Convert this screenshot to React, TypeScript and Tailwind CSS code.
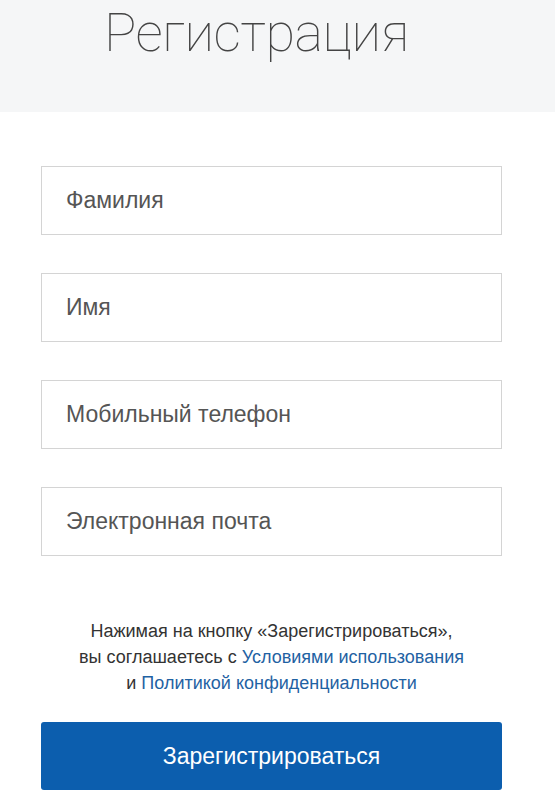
import React from 'react';

const fields = ['Фамилия', 'Имя', 'Мобильный телефон', 'Электронная почта'];

export default function App() {
  return (
    <div className="min-h-[800px] bg-white" style={{ fontFamily: '"Liberation Sans", Arial, sans-serif' }}>
      {/* Header */}
      <div className="h-[112px] bg-[#f5f6f7] flex justify-center pr-[42px]">
        <h1
          className="text-[54px] leading-none font-thin text-[#444] mt-[6px] tracking-[-0.5px]"
          style={{ fontFamily: 'Roboto, sans-serif' }}
        >
          Регистрация
        </h1>
      </div>

      {/* Form */}
      <div className="pl-[41px] pr-[53px] pt-[54px]">
        <div className="flex flex-col gap-[38px]">
          {fields.map((label) => (
            <div
              key={label}
              className="h-[69px] border border-[#d4d4d4] flex items-center px-[24px] text-[23px] text-[#555]"
            >
              {label}
            </div>
          ))}
        </div>

        <p className="mt-[62px] text-center text-[18px] leading-[26px] text-[#333]">
          Нажимая на кнопку «Зарегистрироваться»,
          <br />
          вы соглашаетесь с <a className="text-[#1f62a3]">Условиями использования</a>
          <br />
          и <a className="text-[#1f62a3]">Политикой конфиденциальности</a>
        </p>

        <button className="mt-[26px] w-full h-[68px] rounded-[3px] bg-[#0c5eae] text-white text-[23px]">
          Зарегистрироваться
        </button>
      </div>
    </div>
  );
}
